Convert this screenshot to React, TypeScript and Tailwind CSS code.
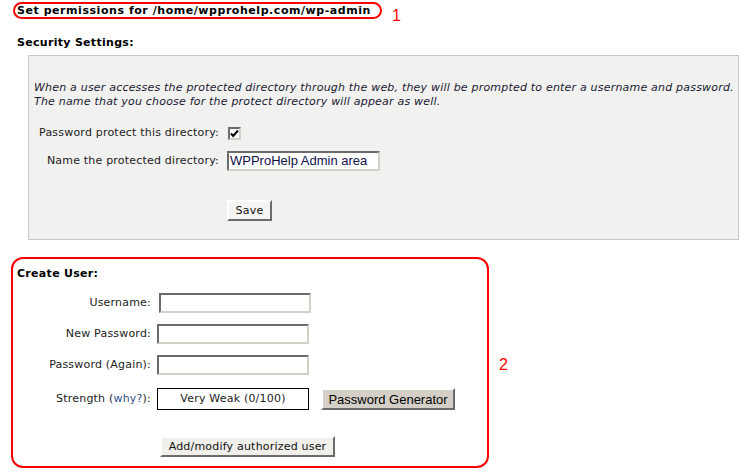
const font = "font-['DejaVu_Sans',Verdana,sans-serif]";

function Inset({ w, children, className = "" }: { w: string; children?: React.ReactNode; className?: string }) {
  return (
    <div
      className={`${w} h-[20px] bg-white border-2 border-t-[#6b6b6b] border-l-[#6b6b6b] border-b-[#d4d0c8] border-r-[#d4d0c8] flex items-center pl-[1px] font-['Liberation_Sans',Arial,sans-serif] text-[13px] tracking-normal text-[#10104a] ${className}`}
    >
      {children}
    </div>
  );
}

function Raised({ children, className = "" }: { children: React.ReactNode; className?: string }) {
  return (
    <button
      type="button"
      className={`h-[21px] border-2 border-t-white border-l-white border-b-[#6b6b6b] border-r-[#6b6b6b] leading-none ${className}`}
    >
      {children}
    </button>
  );
}

export default function App() {
  return (
    <div className={`w-[755px] h-[475px] bg-white text-[11px] leading-[14px] tracking-[0.2px] text-[#111] ${font}`}>
      <div className="flex items-start pt-[2px] pl-[13px] h-[19px]">
        <span className="border-2 border-[#f00] rounded-full px-[2px] h-[17px] flex items-center font-bold tracking-[0.55px] text-[#000] w-[369px] whitespace-nowrap">
          Set permissions for /home/wpprohelp.com/wp-admin
        </span>
        <span className="ml-[10px] mt-[6px] font-['Liberation_Sans',Arial,sans-serif] text-[16px] leading-none tracking-normal text-[#f00]">1</span>
      </div>

      <div className="pl-[17px] pt-[17px] font-bold tracking-[0.3px] text-[#000] leading-[14px]">Security Settings:</div>

      <div className="ml-[28px] mt-[5px] w-[711px] h-[185px] border border-[#c8c8c8] bg-[#f1f1ef] pl-[5px] pt-[25px]">
        <p className="italic leading-[14px] text-[#1a1a33]">
          When a user accesses the protected directory through the web, they will be prompted to enter a username and password.
          <br />
          The name that you choose for the protect directory will appear as well.
        </p>

        <div className="grid grid-cols-[185px_auto] gap-x-[8px] mt-[13px] items-center">
          <div className="text-right text-[#222]">Password protect this directory:</div>
          <div className="h-[22px] flex items-center pl-[1px]">
            <span className="w-[13px] h-[13px] bg-white border-2 border-t-[#6b6b6b] border-l-[#6b6b6b] border-b-[#d4d0c8] border-r-[#d4d0c8] flex items-center justify-center">
              <svg width="9" height="9" viewBox="0 0 9 9">
                <path d="M1 4.5 L3.2 7 L8 1.5" stroke="#000" strokeWidth="2" fill="none" />
              </svg>
            </span>
          </div>
          <div className="text-right text-[#222] mt-[7px]">Name the protected directory:</div>
          <div className="mt-[7px]">
            <Inset w="w-[153px]">WPProHelp Admin area</Inset>
          </div>
        </div>

        <div className="pl-[193px] mt-[29px]">
          <Raised className="w-[45px] bg-[#f4f4f2] text-[11px] text-[#111]">Save</Raised>
        </div>
      </div>

      <div className="flex items-center mt-[17px]">
        <div className="ml-[11px] w-[478px] h-[211px] border-2 border-[#f00] rounded-[12px] pl-[4px] pt-[8px]">
          <div className="font-bold tracking-[0.3px] text-[#000] leading-[14px]">Create User:</div>
          <div className="grid grid-cols-[134px_auto] gap-x-[6px] mt-[12px] items-center text-[#222]">
            <div className="text-right">Username:</div>
            <Inset w="w-[152px]" className="ml-[2px]" />
            <div className="text-right mt-[11px]">New Password:</div>
            <Inset w="w-[152px]" className="mt-[11px]" />
            <div className="text-right mt-[11px]">Password (Again):</div>
            <Inset w="w-[152px]" className="mt-[11px]" />
            <div className="text-right mt-[13px]">
              Strength (<span className="text-[#33508a]">why?</span>):
            </div>
            <div className="flex items-center mt-[13px]">
              <div className="w-[152px] h-[22px] border border-black bg-white flex items-center justify-center">
                Very Weak (0/100)
              </div>
              <Raised className="ml-[12px] w-[134px] h-[22px] bg-[#d4d0c8] font-['Liberation_Sans',Arial,sans-serif] text-[13px] tracking-normal text-[#000]">
                Password Generator
              </Raised>
            </div>
          </div>
          <div className="pl-[143px] mt-[26px]">
            <Raised className="w-[175px] bg-[#f0efea] text-[11px] text-[#111]">Add/modify authorized user</Raised>
          </div>
        </div>
        <span className="ml-[10px] mt-[4px] font-['Liberation_Sans',Arial,sans-serif] text-[16px] leading-none tracking-normal text-[#f00]">2</span>
      </div>
    </div>
  );
}
